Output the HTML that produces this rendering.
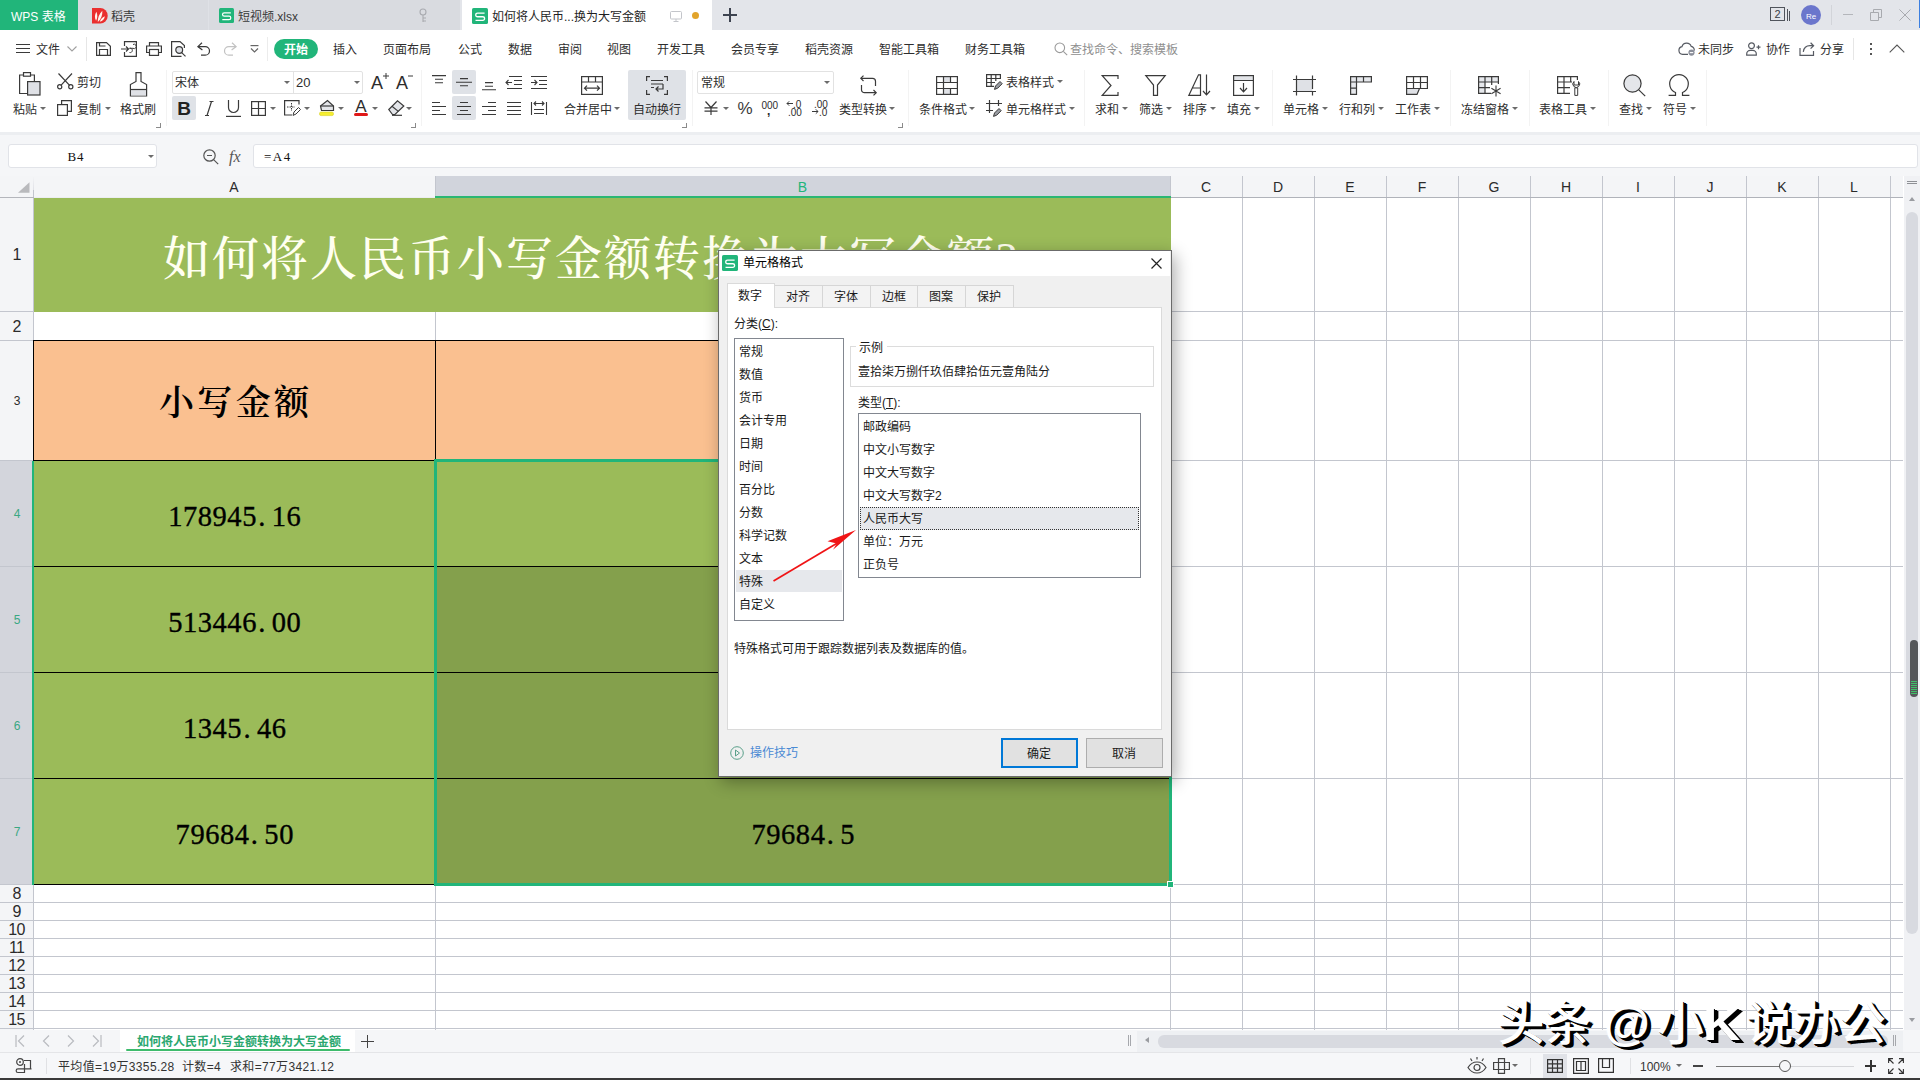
<!DOCTYPE html>
<html lang="zh-CN">
<head>
<meta charset="utf-8">
<title>WPS 表格 - 如何将人民币小写金额转换为大写金额</title>
<style>
*{box-sizing:border-box;margin:0;padding:0}
html,body{width:1920px;height:1080px;overflow:hidden;background:#fff}
body{position:relative;font-family:"Liberation Sans","Noto Sans CJK SC",sans-serif;font-size:12px;color:#2b2b2b;line-height:1}
.abs{position:absolute}
.t{position:absolute;white-space:nowrap;font-size:12px;line-height:14px;height:14px;color:#2d2d2d;margin-top:1px}
.tc{transform:translateX(-50%)}
svg{position:absolute;overflow:visible}
.ic{fill:none;stroke:#3a3a3a;stroke-width:1.2;stroke-linecap:butt;stroke-linejoin:miter}
.arr{position:absolute;width:0;height:0;border-left:3px solid transparent;border-right:3px solid transparent;border-top:3px solid #6b6b6b}
.vsep{position:absolute;width:1px;background:#f3f3f3;top:70px;height:56px}
.lch{position:absolute;width:5px;height:5px;border-right:1px solid #8a8a8a;border-bottom:1px solid #8a8a8a;top:123px}
.hl{position:absolute;background:#dfe2e7;border-radius:2px}
/* title bar */
#titlebar{left:0;top:0;width:1920px;height:30px;background:#e3e5ea}
#menubar{left:0;top:30px;width:1920px;height:36px;background:#fff}
#ribbon{left:0;top:66px;width:1920px;height:66px;background:#fff}
#strip{left:0;top:132px;width:1920px;height:3px;background:#eceef1}
#fbar{left:0;top:135px;width:1920px;height:41px;background:#f5f6f8}
.menu{position:absolute;top:43px;font-size:12px;line-height:14px;color:#2d2d2d;white-space:nowrap}
/* grid */
#grid{left:0;top:176px;width:1905px;height:854px;background:#fff;overflow:hidden}
.colh{position:absolute;top:0;height:21px;font-size:14px;line-height:21px;text-align:center;color:#2b2b2b;border-right:1px solid #d3d6dd}
.rowh{position:absolute;left:0;width:33px;font-size:14px;text-align:center;color:#2b2b2b}
.gl{position:absolute;background:#c3c6ce}
.cell{position:absolute;font-family:"Liberation Serif","Noto Serif CJK SC",serif;color:#000;text-align:center;white-space:nowrap}
/* dialog */
#dlg{left:718px;top:250px;width:454px;height:527px;background:#f0f0f0;border:1px solid #6b6b6b;box-shadow:3px 5px 16px rgba(0,0,0,.33)}
.dl{position:absolute;font-size:12px;line-height:14px;white-space:nowrap;color:#1a1a1a;margin-top:1px}
</style>
</head>
<body>
<!-- ============ TITLE BAR ============ -->
<div id="titlebar" class="abs">
  <div class="abs" style="left:0;top:0;width:78px;height:30px;background:#21b57a"></div>
  <div class="t" style="left:11px;top:9px;color:#fff;font-size:12px">WPS 表格</div>
  <div class="abs" style="left:78px;top:0;width:130px;height:30px;background:#d9dbe0"></div>
  <div class="abs" style="left:208px;top:0;width:1px;height:30px;background:#dfe1e6"></div>
  <div class="abs" style="left:209px;top:0;width:251px;height:30px;background:#d9dbe0"></div>
  <!-- docer icon -->
  <svg style="left:92px;top:8px" width="15.5" height="15.5" viewBox="0 0 15 15"><path d="M0 0H8A7.2 7.5 0 0 1 8 15H0Z" fill="#ea2f2f"/><path d="M3.9 12.3C2.3 9.6 2.6 6.3 4.2 3.6C5.6 6.6 5.4 9.8 3.9 12.3ZM5.6 13.6C5.4 9.4 7 5.6 10 2.6C10.3 7 8.8 10.8 5.6 13.600ZM7.6 13.4C8.2 10.800 9.900 9 12.400 8C12.100 10.600 10.400 12.600 7.600 13.400Z" fill="#fff5ee"/></svg>
  <div class="t" style="left:111px;top:9px;color:#3a3a3a">稻壳</div>
  <!-- S icon -->
  <svg style="left:219px;top:8px" width="15" height="15" viewBox="0 0 15 15"><rect width="15" height="15" rx="1.5" fill="#21b57a"/><path d="M11.800 4.800H5.300Q3.500 4.800 3.500 6.500Q3.500 8.200 5.300 8.200H10Q11.800 8.200 11.800 9.900Q11.800 11.600 10 11.600H3.300" fill="none" stroke="#fff" stroke-width="1.200"/></svg>
  <div class="t" style="left:238px;top:9px;color:#3a3a3a">短视频.xlsx</div>
  <!-- pin -->
  <svg style="left:418px;top:8px" width="10" height="16" viewBox="0 0 10 16"><circle cx="5" cy="4" r="3" fill="none" stroke="#a9abb0" stroke-width="1.1"/><path d="M5 7V14M5 10H8M5 13H8" fill="none" stroke="#a9abb0" stroke-width="1.1"/></svg>
  <!-- active tab -->
  <div class="abs" style="left:462px;top:0;width:250px;height:30px;background:#fff"></div>
  <svg style="left:472px;top:8px" width="16" height="16" viewBox="0 0 15 15"><rect width="15" height="15" rx="1.5" fill="#21b57a"/><path d="M11.800 4.800H5.300Q3.500 4.800 3.500 6.500Q3.500 8.200 5.300 8.200H10Q11.800 8.200 11.800 9.900Q11.800 11.600 10 11.600H3.300" fill="none" stroke="#fff" stroke-width="1.200"/></svg>
  <div class="t" style="left:492px;top:9px;color:#1f1f1f">如何将人民币...换为大写金额</div>
  <svg style="left:670px;top:11px" width="12" height="11" viewBox="0 0 12 11"><rect x=".5" y=".5" width="11" height="7.5" rx="1" fill="none" stroke="#c3c5ca"/><path d="M6 8V10.5M3.5 10.5H8.5" stroke="#c3c5ca" fill="none"/></svg>
  <div class="abs" style="left:692px;top:12px;width:7px;height:7px;border-radius:50%;background:#e2a42b"></div>
  <!-- plus -->
  <div class="abs" style="left:723px;top:14px;width:14px;height:2px;background:#3d4350"></div>
  <div class="abs" style="left:729px;top:8px;width:2px;height:14px;background:#3d4350"></div>
  <!-- right controls -->
  <svg style="left:1770px;top:7px" width="21" height="15" viewBox="0 0 21 15"><rect x=".5" y=".5" width="14" height="13" fill="none" stroke="#50545c"/><path d="M17.5 2V14M19.5 4V14" stroke="#50545c" fill="none"/><text x="7.5" y="11.3" font-size="11" text-anchor="middle" fill="#3a3d44" font-family="Liberation Sans,sans-serif">2</text></svg>
  <div class="abs" style="left:1801px;top:5px;width:20px;height:20px;border-radius:50%;background:#6b76cc"></div>
  <div class="t" style="left:1811px;top:9px;font-size:8px;color:#fff;transform:translateX(-50%)">Re</div>
  <div class="abs" style="left:1831px;top:5px;width:1px;height:20px;background:#d2d4d9"></div>
  <div class="abs" style="left:1843px;top:14px;width:10px;height:1px;background:#b4b6bb"></div>
  <svg style="left:1870px;top:9px" width="12" height="12" viewBox="0 0 12 12"><path d="M.5 3.5H8.5V11.5H.5ZM3.5 3.5V.5H11.5V8.5H8.5" fill="none" stroke="#a8aaaf"/></svg>
  <svg style="left:1899px;top:9px" width="12" height="12" viewBox="0 0 12 12"><path d="M.5 .5L11.5 11.5M11.5 .5L.5 11.5" fill="none" stroke="#a8aaaf"/></svg>
</div>
<div class="abs" style="left:1919px;top:0;width:1px;height:28px;background:#3c7fe0"></div>
<!-- ============ MENU BAR ============ -->
<div id="menubar" class="abs"></div>
<svg style="left:16px;top:43px" width="14" height="12" viewBox="0 0 14 12"><path d="M0 1.500H14M0 5.500H14M0 9.500H14" class="ic" style="stroke-width:1.100"/></svg>
<div class="menu" style="left:36px">文件</div>
<svg style="left:67px;top:46px" width="10" height="6" viewBox="0 0 10 6"><path d="M.5 .5L5 5L9.5 .5" fill="none" stroke="#a0a0a0" stroke-width="1.1"/></svg>
<div class="abs" style="left:86px;top:37px;width:1px;height:24px;background:#e6e6e6"></div>
<!-- save -->
<svg style="left:96px;top:42px" width="15" height="14" viewBox="0 0 15 14"><path d="M.6 .6H10.5L14.4 4.2V13.4H.6Z" class="ic"/><path d="M3.5 13.4V7.5H11.5V13.4M3.5 .6V4H9.5" class="ic"/></svg>
<!-- export -->
<svg style="left:121px;top:41px" width="16" height="16" viewBox="0 0 16 16"><path d="M3.5 5V.6H15.4V15.4H3.5V11" class="ic"/><path d="M0 8H7.5M5 5.5L7.5 8L5 10.5" class="ic"/><path d="M8.5 11.5A2.2 2.2 0 1 0 8.5 7.3H12A2.2 2.2 0 1 0 12 3.5" class="ic" style="stroke-width:1"/></svg>
<!-- print -->
<svg style="left:146px;top:42px" width="16" height="14" viewBox="0 0 16 14"><path d="M3.5 4V.6H12.5V4M3.5 10.5H.6V4H15.4V10.5H12.5" class="ic"/><rect x="3.5" y="7.5" width="9" height="5.9" class="ic"/></svg>
<!-- preview -->
<svg style="left:171px;top:41px" width="16" height="16" viewBox="0 0 16 16"><path d="M10.5 15.4H.6V.6H9L13.4 4.5V7" class="ic"/><circle cx="8.2" cy="9" r="3.4" class="ic" fill="#dfe1e6" style="fill:#dfe1e6"/><path d="M10.7 11.6L14.5 15.4" class="ic"/></svg>
<!-- undo -->
<svg style="left:197px;top:42px" width="14" height="14" viewBox="0 0 14 14"><path d="M5 .8L.9 4.6L5.4 8" class="ic"/><path d="M1 4.6H8.2A4.3 4.3 0 0 1 8.2 13.2H4" class="ic"/></svg>
<!-- redo -->
<svg style="left:223px;top:42px" width="14" height="14" viewBox="0 0 14 14"><path d="M9 .8L13.1 4.6L8.6 8" class="ic" style="stroke:#c2c2c2"/><path d="M13 4.6H5.8A4.3 4.3 0 0 0 5.8 13.2H10" class="ic" style="stroke:#c2c2c2"/></svg>
<!-- qat dropdown -->
<svg style="left:250px;top:45px" width="9" height="8" viewBox="0 0 9 8"><path d="M.5 .6H8.5" class="ic" style="stroke:#666"/><path d="M1 3.5L4.5 7L8 3.5" class="ic" style="stroke:#666"/></svg>
<div class="abs" style="left:267px;top:37px;width:1px;height:24px;background:#ececec"></div>
<div class="abs" style="left:274px;top:39px;width:44px;height:20px;border-radius:10px;background:#21b57a"></div>
<div class="menu" style="left:284px;color:#fff;font-weight:bold">开始</div>
<div class="menu" style="left:333px">插入</div>
<div class="menu" style="left:383px">页面布局</div>
<div class="menu" style="left:458px">公式</div>
<div class="menu" style="left:508px">数据</div>
<div class="menu" style="left:558px">审阅</div>
<div class="menu" style="left:607px">视图</div>
<div class="menu" style="left:657px">开发工具</div>
<div class="menu" style="left:731px">会员专享</div>
<div class="menu" style="left:805px">稻壳资源</div>
<div class="menu" style="left:879px">智能工具箱</div>
<div class="menu" style="left:965px">财务工具箱</div>
<svg style="left:1054px;top:42px" width="14" height="14" viewBox="0 0 14 14"><circle cx="5.8" cy="5.8" r="4.8" fill="none" stroke="#9a9a9a" stroke-width="1.1"/><path d="M9.3 9.3L13.2 13.2" stroke="#9a9a9a" stroke-width="1.1"/></svg>
<div class="menu" style="left:1070px;color:#8f8f8f">查找命令、搜索模板</div>
<!-- right -->
<svg style="left:1678px;top:42px" width="18" height="14" viewBox="0 0 18 14"><path d="M10 12.4H4.6A3.9 3.9 0 0 1 4 4.7A4.8 4.8 0 0 1 13.2 4.4A3.6 3.6 0 0 1 16.2 8.6" class="ic" style="stroke:#565a62"/><circle cx="13.5" cy="10.6" r="3.1" fill="#8a8e99"/><path d="M11.8 10.6H15.2" stroke="#fff" stroke-width="1.1"/></svg>
<div class="menu" style="left:1698px">未同步</div>
<svg style="left:1746px;top:42px" width="15" height="14" viewBox="0 0 15 14"><circle cx="5.5" cy="3.8" r="2.9" class="ic" style="stroke:#565a62"/><path d="M.7 13.2V12A3.6 3.6 0 0 1 4.3 8.4H6.7A3.6 3.6 0 0 1 10.3 12V13.2Z" class="ic" style="stroke:#565a62"/><path d="M10.5 5.2H14.5M12.5 3.2V7.2" class="ic" style="stroke:#565a62"/></svg>
<div class="menu" style="left:1766px">协作</div>
<svg style="left:1799px;top:42px" width="16" height="14" viewBox="0 0 16 14"><path d="M1 6V13.3H14.5V9" class="ic" style="stroke:#565a62"/><path d="M4.3 9.8C4.8 6 7.5 3.7 11 3.7H14.5M11.6 .8L14.6 3.7L11.6 6.6" class="ic" style="stroke:#565a62"/></svg>
<div class="menu" style="left:1820px">分享</div>
<div class="abs" style="left:1853px;top:38px;width:1px;height:22px;background:#e6e6e6"></div>
<div class="abs" style="left:1870px;top:43px;width:2px;height:2px;background:#555;box-shadow:0 5px 0 #555,0 10px 0 #555"></div>
<svg style="left:1889px;top:44px" width="16" height="9" viewBox="0 0 16 9"><path d="M.7 8.3L8 1L15.3 8.3" fill="none" stroke="#555" stroke-width="1.1"/></svg>
<!-- ============ RIBBON ============ -->
<div id="ribbon" class="abs"></div>
<div id="strip" class="abs"></div>
<!-- paste -->
<svg style="left:19px;top:72px" width="22" height="24" viewBox="0 0 22 24"><path d="M4.5 3H.6V21.5H8.5" class="ic"/><path d="M11.5 3H15.4V9.5" class="ic"/><rect x="4.5" y=".6" width="7" height="3.6" class="ic"/><rect x="8.6" y="9.6" width="12.4" height="13.4" class="ic" style="fill:#dfe1e6"/></svg>
<div class="t" style="left:13px;top:102px">粘贴</div><div class="arr" style="left:40px;top:107px"></div>
<!-- cut -->
<svg style="left:57px;top:73px" width="17" height="17" viewBox="0 0 17 17"><path d="M1.5 .5L12.6 12.4M15 .5L3.9 12.4" class="ic"/><circle cx="2.7" cy="13.8" r="2.1" class="ic"/><circle cx="13.8" cy="13.8" r="2.1" class="ic"/></svg>
<div class="t" style="left:77px;top:75px">剪切</div>
<!-- copy -->
<svg style="left:57px;top:100px" width="16" height="16" viewBox="0 0 16 16"><path d="M4.6 4.6V.6H14.4V11.4H10.5" class="ic"/><rect x=".6" y="4.6" width="9.8" height="10.8" class="ic"/></svg>
<div class="t" style="left:77px;top:102px">复制</div><div class="arr" style="left:105px;top:107px"></div>
<!-- format painter -->
<svg style="left:129px;top:72px" width="19" height="25" viewBox="0 0 19 25"><path d="M7 .6H12V9.5L17.6 12.5V24H1.4V12.5L7 9.5Z" class="ic"/><path d="M2 18H17V23.4H2Z" fill="#dfe1e6"/><path d="M1.4 17.5H17.6" class="ic"/></svg>
<div class="t" style="left:120px;top:102px">格式刷</div>
<div class="lch" style="left:156px"></div>
<div class="vsep" style="left:166px"></div>
<!-- font boxes -->
<div class="abs" style="left:172px;top:71px;width:191px;height:23px;border:1px solid #e2e2e2;border-radius:2px;background:#fff"></div>
<div class="abs" style="left:293px;top:72px;width:1px;height:21px;background:#e2e2e2"></div>
<div class="t" style="left:175px;top:75px">宋体</div><div class="arr" style="left:284px;top:81px"></div>
<div class="t" style="left:296px;top:75px;font-size:13px">20</div><div class="arr" style="left:354px;top:81px"></div>
<!-- A+ A- -->
<div class="t" style="left:371px;top:73px;font-size:18px;line-height:18px;height:18px">A</div>
<svg style="left:383px;top:73px" width="6" height="6" viewBox="0 0 6 6"><path d="M0 3H6M3 0V6" class="ic" style="stroke-width:1"/></svg>
<div class="t" style="left:396px;top:73px;font-size:18px;line-height:18px;height:18px">A</div>
<svg style="left:408px;top:75px" width="5" height="2" viewBox="0 0 5 2"><path d="M0 1H5" class="ic" style="stroke-width:1"/></svg>
<!-- B I U -->
<div class="hl" style="left:172px;top:96px;width:24px;height:24px"></div>
<div class="t" style="left:184px;top:98px;font-size:19px;line-height:20px;height:20px;font-weight:bold;transform:translateX(-50%);color:#222">B</div>
<svg style="left:205px;top:101px" width="9" height="15" viewBox="0 0 9 15"><path d="M6.5 .5L2 14.5M4.5 .5H8.5M0 14.5H4" class="ic"/></svg>
<svg style="left:226px;top:100px" width="15" height="17" viewBox="0 0 15 17"><path d="M2.5 0V7.5A5 5 0 0 0 12.5 7.5V0" class="ic"/><path d="M0 16.4H15" class="ic"/></svg>
<!-- border -->
<svg style="left:251px;top:101px" width="15" height="15" viewBox="0 0 15 15"><rect x=".6" y=".6" width="13.8" height="13.8" class="ic"/><path d="M7.5 .6V14.4M.6 7.5H14.4" class="ic"/></svg><div class="arr" style="left:270px;top:107px"></div>
<!-- draw border -->
<svg style="left:284px;top:100px" width="17" height="16" viewBox="0 0 17 16"><path d="M8 15H.6V.6H15V4.5" class="ic"/><path d="M7.5 3V11M3 7H11" class="ic" style="stroke-dasharray:1.5 1;stroke-width:1"/><path d="M9 15.4L10 12L14.5 7.5L16.5 9.5L12 14Z" class="ic" style="stroke-width:1"/></svg><div class="arr" style="left:304px;top:107px"></div>
<!-- fill color -->
<svg style="left:318px;top:99px" width="18" height="18" viewBox="0 0 18 18"><path d="M2.5 7L9.5 1.5L15.5 7V11.5H3.5Z" class="ic" style="fill:#e4e6ea"/><path d="M2.5 7H15.5" class="ic"/><rect x="1.5" y="13" width="14" height="3.6" rx="1.6" fill="#f5ee31" stroke="#d8d020" stroke-width=".6"/></svg><div class="arr" style="left:338px;top:107px"></div>
<!-- font color -->
<div class="t" style="left:361px;top:97px;font-size:17px;line-height:18px;height:18px;transform:translateX(-50%);color:#2d2d2d">A</div>
<div class="abs" style="left:354px;top:113px;width:14px;height:3px;border-radius:1.5px;background:#e01818"></div><div class="arr" style="left:372px;top:107px"></div>
<!-- eraser -->
<svg style="left:388px;top:100px" width="17" height="16" viewBox="0 0 17 16"><path d="M.8 9.5L9.5 .8L15.8 6L7 14.5H4.5Z" class="ic" style="fill:#e4e6ea"/><path d="M4 6.3L10.3 11.4" class="ic"/><path d="M4 15.3H14" class="ic"/></svg><div class="arr" style="left:406px;top:107px"></div>
<div class="lch" style="left:411px"></div>
<div class="vsep" style="left:421px"></div>
<!-- alignment -->
<div class="hl" style="left:452px;top:70px;width:24px;height:24px"></div>
<div class="hl" style="left:452px;top:96px;width:24px;height:24px"></div>
<svg style="left:432px;top:74.500px" width="14" height="9" viewBox="0 0 14 9"><path d="M0 .6H14M3 4.2H11M3 7.8H11" class="ic" style="stroke-width:1.1"/></svg>
<svg style="left:456px;top:78px" width="16" height="9" viewBox="0 0 16 9"><path d="M4 .6H12M0 4.2H16M4 7.8H12" class="ic" style="stroke-width:1.1"/></svg>
<svg style="left:482px;top:81.500px" width="14" height="9" viewBox="0 0 14 9"><path d="M3 .6H11M3 4.2H11M0 7.8H14" class="ic" style="stroke-width:1.1"/></svg>
<svg style="left:506px;top:76px" width="16" height="13" viewBox="0 0 16 13"><path d="M3 .5H16M8 4.5H16M8 8.5H16M1 12.5H16M0 6.5H6M2.5 4L0 6.5L2.5 9" class="ic" style="stroke-width:1.1"/></svg>
<svg style="left:531px;top:76px" width="16" height="13" viewBox="0 0 16 13"><path d="M0 .5H16M8 4.5H16M8 8.5H16M0 12.5H16M0 6.5H6M3.5 4L6 6.5L3.5 9" class="ic" style="stroke-width:1.1"/></svg>
<svg style="left:432px;top:102px" width="14" height="13" viewBox="0 0 14 13"><path d="M0 .5H8M0 4.5H14M0 8.5H8M0 12.5H14" class="ic" style="stroke-width:1.1"/></svg>
<svg style="left:457px;top:102px" width="14" height="13" viewBox="0 0 14 13"><path d="M3 .5H11M0 4.5H14M3 8.5H11M0 12.5H14" class="ic" style="stroke-width:1.1"/></svg>
<svg style="left:482px;top:102px" width="14" height="13" viewBox="0 0 14 13"><path d="M6 .5H14M0 4.5H14M6 8.5H14M0 12.5H14" class="ic" style="stroke-width:1.1"/></svg>
<svg style="left:507px;top:102px" width="14" height="13" viewBox="0 0 14 13"><path d="M0 .5H14M0 4.5H14M0 8.5H14M0 12.5H14" class="ic" style="stroke-width:1.1"/></svg>
<svg style="left:531px;top:101px" width="16" height="14" viewBox="0 0 16 14"><path d="M.5 1V14M15.5 1V14M3 8.5H13M3 12.5H13M3 2.5H13M5 .5L3 2.5L5 4.5M11 .5L13 2.5L11 4.5" class="ic" style="stroke-width:1.1"/></svg>
<!-- merge -->
<svg style="left:581px;top:76px" width="22" height="19" viewBox="0 0 22 19"><rect x=".6" y=".6" width="20.8" height="17.8" class="ic"/><path d="M.6 6H21.4M7.5 .6V6M14.5 .6V6M3.5 12.2H18.5M6 9.7L3.5 12.2L6 14.7M16 9.7L18.5 12.2L16 14.7" class="ic"/></svg>
<div class="t" style="left:564px;top:102px">合并居中</div><div class="arr" style="left:614px;top:107px"></div>
<!-- wrap -->
<div class="hl" style="left:628px;top:70px;width:58px;height:50px"></div>
<svg style="left:646px;top:76px" width="22" height="19" viewBox="0 0 22 19"><path d="M4 .6H.6V5M18 .6H21.4V5M4 18.4H.6V14M18 18.4H21.4V14" class="ic"/><path d="M5 4.5H17M5 8H17M17 8V13H10M12.5 10.5L10 13L12.5 15.5M5 11.5H8" class="ic"/></svg>
<div class="t" style="left:633px;top:102px">自动换行</div>
<div class="lch" style="left:682px"></div>
<div class="vsep" style="left:692px"></div>
<!-- number format -->
<div class="abs" style="left:697px;top:71px;width:137px;height:23px;border:1px solid #e2e2e2;border-radius:2px;background:#fff"></div>
<div class="t" style="left:701px;top:75px">常规</div><div class="arr" style="left:824px;top:81px"></div>
<svg style="left:704px;top:101px" width="14" height="14" viewBox="0 0 14 14"><path d="M1.5 .5L7 6.5L12.5 .5M7 6.5V14M.5 6.8H13.5M.5 10.2H13.5" class="ic"/></svg><div class="arr" style="left:723px;top:107px"></div>
<div class="t" style="left:737.500px;top:100px;font-size:17px;line-height:16px;height:16px;color:#3a3a3a">%</div>
<div class="t" style="left:761.500px;top:99.500px;font-size:10px;line-height:10px;height:10px;letter-spacing:0">000</div>
<div class="t" style="left:767px;top:105px;font-size:12px;line-height:10px;height:10px;font-weight:bold">,</div>
<div class="t" style="left:793px;top:98.500px;font-size:10px;line-height:10px;height:10px">.0</div>
<svg style="left:787px;top:100.500px" width="6" height="5" viewBox="0 0 6 5"><path d="M0 2.5H6M2.2 .3L0 2.5L2.2 4.7" class="ic" style="stroke-width:1"/></svg>
<div class="t" style="left:788px;top:107px;font-size:10px;line-height:10px;height:10px">.00</div>
<div class="t" style="left:814px;top:98.500px;font-size:10px;line-height:10px;height:10px">.00</div>
<svg style="left:812px;top:109px" width="6" height="5" viewBox="0 0 6 5"><path d="M0 2.5H6M3.8 .3L6 2.5L3.8 4.7" class="ic" style="stroke-width:1"/></svg>
<div class="t" style="left:819px;top:107px;font-size:10px;line-height:10px;height:10px">.0</div>
<!-- type convert -->
<svg style="left:859px;top:75px" width="19" height="21" viewBox="0 0 19 21"><path d="M4.500 .6L1.800 3.300L4.500 6" class="ic"/><path d="M2 3.300H13.500A3 3 0 0 1 16.500 6.300V11" class="ic"/><path d="M14.500 15L17.200 17.700L14.500 20.400" class="ic"/><path d="M17 17.700H5.500A3 3 0 0 1 2.500 14.700V10" class="ic"/></svg>
<div class="t" style="left:839px;top:102px">类型转换</div><div class="arr" style="left:889px;top:107px"></div>
<div class="lch" style="left:898px"></div>
<div class="vsep" style="left:908px"></div>
<!-- conditional format -->
<svg style="left:936px;top:76px" width="22" height="19" viewBox="0 0 22 19"><path d="M7.500 .6H14.500V6.500H7.500ZM7.500 12.500H14.500V18.400H7.500Z" fill="#dfe1e6"/><rect x=".6" y=".6" width="20.800" height="17.800" class="ic"/><path d="M.6 6.500H21.400M.6 12.500H21.400M7.500 .6V18.400M14.500 .6V6.500M14.500 12.500V18.400" class="ic"/></svg>
<div class="t" style="left:919px;top:102px">条件格式</div><div class="arr" style="left:969px;top:107px"></div>
<!-- table style -->
<svg style="left:986px;top:74px" width="17" height="16" viewBox="0 0 17 16"><path d="M8 12.400H.6V.6H14.400V5" class="ic"/><path d="M.6 4.500H14.400M.6 8.500H9M5.200 .6V12.400M9.800 .6V7" class="ic"/><path d="M8.500 15.400L9.500 12L14 7.500L16.200 9.700L11.700 14.200Z" class="ic" style="stroke-width:1;fill:#9a9da3"/></svg>
<div class="t" style="left:1006px;top:75px">表格样式</div><div class="arr" style="left:1057px;top:80px"></div>
<!-- cell style -->
<svg style="left:986px;top:100px" width="17" height="17" viewBox="0 0 17 17"><path d="M3.500 0V13M0 3.500H16M12.500 0V6M0 10.500H7" class="ic"/><path d="M7.500 16.400L8.500 13L13 8.500L15.200 10.700L10.700 15.200Z" class="ic" style="stroke-width:1;fill:#9a9da3"/></svg>
<div class="t" style="left:1006px;top:102px">单元格样式</div><div class="arr" style="left:1069px;top:107px"></div>
<div class="vsep" style="left:1084px"></div>
<!-- sum -->
<svg style="left:1101px;top:75px" width="18" height="21" viewBox="0 0 18 21"><path d="M17 4V.6H1.200L10 10.500L1.200 20.400H17V17" class="ic"/></svg>
<div class="t" style="left:1095px;top:102px">求和</div><div class="arr" style="left:1122px;top:107px"></div>
<!-- filter -->
<svg style="left:1145px;top:75px" width="21" height="21" viewBox="0 0 21 21"><path d="M.8 .6H20.200L12.500 10V20.400H8.500V10Z" class="ic"/></svg>
<div class="t" style="left:1139px;top:102px">筛选</div><div class="arr" style="left:1166px;top:107px"></div>
<!-- sort -->
<svg style="left:1188px;top:74px" width="23" height="22" viewBox="0 0 23 22"><path d="M.8 21.400L10.500 .8H12.500V21.400ZM4.500 14H12.500" class="ic"/><path d="M18.500 .6V20.500M15 17L18.500 20.800L22 17" class="ic"/></svg>
<div class="t" style="left:1183px;top:102px">排序</div><div class="arr" style="left:1210px;top:107px"></div>
<!-- fill -->
<svg style="left:1233px;top:75px" width="21" height="21" viewBox="0 0 21 21"><rect x=".6" y=".6" width="19.800" height="4.900" fill="#e2e4e8"/><rect x=".6" y=".6" width="19.800" height="19.800" class="ic"/><path d="M.6 5.500H20.400M10.500 8V16.500M7 13L10.500 16.800L14 13" class="ic"/></svg>
<div class="t" style="left:1227px;top:102px">填充</div><div class="arr" style="left:1254px;top:107px"></div>
<div class="vsep" style="left:1272px"></div>
<!-- cells -->
<svg style="left:1293px;top:75px" width="23" height="21" viewBox="0 0 23 21"><rect x="3.500" y="4.500" width="16" height="12" fill="#dfe1e6"/><path d="M0 4.500H23M0 16.500H23M3.500 .5V20.500M19.500 .5V14M19.500 17V20.500" class="ic"/></svg>
<div class="t" style="left:1283px;top:102px">单元格</div><div class="arr" style="left:1322px;top:107px"></div>
<!-- rows & cols -->
<svg style="left:1350px;top:76px" width="22" height="19" viewBox="0 0 22 19"><path d="M.6 .6H21.400V6H6.500V18.400H.6Z" fill="#e6e8ec"/><path d="M.6 .6H21.400V6H.6ZM.6 6V18.400H6.500V6M.6 12.200H6.500M6.500 .6V6M13.500 .6V6" class="ic"/></svg>
<div class="t" style="left:1339px;top:102px">行和列</div><div class="arr" style="left:1378px;top:107px"></div>
<!-- worksheet -->
<svg style="left:1406px;top:76px" width="22" height="19" viewBox="0 0 22 19"><path d="M.6 12.500H13.500L11 18.400H.6Z" fill="#dfe1e6"/><path d="M.6 .6H21.400V12.500H.6ZM.6 6.500H21.400M7.500 .6V12.500M14.500 .6V12.500M.6 12.500V18.400H11L13.500 12.500" class="ic"/></svg>
<div class="t" style="left:1395px;top:102px">工作表</div><div class="arr" style="left:1434px;top:107px"></div>
<div class="vsep" style="left:1450px"></div>
<!-- freeze -->
<svg style="left:1478px;top:76px" width="23" height="20" viewBox="0 0 23 20"><path d="M.6 .6H20.400V6H7V17.400H.6Z" fill="#e6e8ec"/><path d="M13 17.400H.6V.6H20.400V8" class="ic"/><path d="M.6 6H20.400M.6 11.700H12M7 .6V17.400M13.700 .6V9" class="ic"/><path d="M18 9.500V20.500M13.400 12.300L22.600 17.700M22.600 12.300L13.400 17.700" class="ic" style="stroke-width:1.100"/></svg>
<div class="t" style="left:1461px;top:102px">冻结窗格</div><div class="arr" style="left:1512px;top:107px"></div>
<div class="vsep" style="left:1529px"></div>
<!-- table tools -->
<svg style="left:1557px;top:76px" width="24" height="20" viewBox="0 0 24 20"><path d="M13 17.400H.6V.6H20.400V4" class="ic"/><path d="M.6 6H15M.6 11.700H13M7 .6V17.400M13.700 .6V6" class="ic"/><path d="M17 5.500A3.400 3.400 0 1 0 21.500 5.500V9H17ZM17.800 11.800H20.700V19.400H17.800Z" class="ic" style="stroke-width:1;fill:#fff"/></svg>
<div class="t" style="left:1539px;top:102px">表格工具</div><div class="arr" style="left:1590px;top:107px"></div>
<div class="vsep" style="left:1608px"></div>
<!-- find -->
<svg style="left:1623px;top:74px" width="23" height="23" viewBox="0 0 23 23"><circle cx="9.500" cy="9.500" r="8.600" class="ic" style="fill:#e4e6ea"/><path d="M15.800 15.800L22.200 22.200" class="ic"/></svg>
<div class="t" style="left:1619px;top:102px">查找</div><div class="arr" style="left:1646px;top:107px"></div>
<!-- symbol -->
<svg style="left:1668px;top:74px" width="22" height="22" viewBox="0 0 22 22"><path d="M.6 21.400H7.500V18.500A9.300 9.300 0 1 1 14.500 18.500V21.400H21.400" class="ic"/></svg>
<div class="t" style="left:1663px;top:102px">符号</div><div class="arr" style="left:1690px;top:107px"></div>
<div class="vsep" style="left:1706px"></div>
<!-- ============ FORMULA BAR ============ -->
<div id="fbar" class="abs"></div>
<div class="abs" style="left:8px;top:144px;width:149px;height:24px;background:#fff;border:1px solid #e1e3e8;border-radius:3px"></div>
<div class="t" style="left:76px;top:149px;font-family:'Liberation Serif','Noto Serif CJK SC',serif;font-size:13px;letter-spacing:1px;color:#111;transform:translateX(-50%)">B4</div>
<div class="arr" style="left:148px;top:155px"></div>
<svg style="left:203px;top:149px" width="16" height="16" viewBox="0 0 16 16"><circle cx="6.500" cy="6.500" r="5.700" class="ic" style="stroke:#555"/><path d="M10.600 10.600L15.200 15.200M4 6.500H9" class="ic" style="stroke:#555"/></svg>
<div class="t" style="left:229px;top:147px;font-family:'Liberation Serif',serif;font-style:italic;font-size:16px;line-height:18px;height:18px;color:#555">fx</div>
<div class="abs" style="left:253px;top:144px;width:1665px;height:24px;background:#fff;border:1px solid #e1e3e8;border-radius:3px"></div>
<div class="t" style="left:264px;top:149px;font-family:'Liberation Serif','Noto Serif CJK SC',serif;font-size:13px;letter-spacing:1.500px;color:#111">=A4</div>
<!-- ============ GRID ============ -->
<div id="grid" class="abs">
<div class="abs" style="left:0;top:0;width:1903px;height:21px;background:#f4f5f7"></div>
<div class="abs" style="left:0;top:21px;width:33px;height:833px;background:#f4f5f7"></div>
<div class="abs" style="left:435px;top:0;width:736px;height:21px;background:#d1d4dc"></div>
<div class="abs" style="left:0;top:285px;width:33px;height:424px;background:#d3d5dc"></div>
<svg style="left:17.500px;top:6px" width="11.500" height="11" viewBox="0 0 12 11"><path d="M12 0V11H0Z" fill="#b9babd"/></svg>
<div class="abs" style="left:33px;top:0;width:402px;height:21px;line-height:22px;font-size:14px;text-align:center;color:#2b2b2b">A</div>
<div class="abs" style="left:435px;top:0;width:735px;height:21px;line-height:22px;font-size:14px;text-align:center;color:#21b57a">B</div>
<div class="abs" style="left:1170px;top:0;width:72px;height:21px;line-height:22px;font-size:14px;text-align:center;color:#2b2b2b">C</div>
<div class="abs" style="left:1242px;top:0;width:72px;height:21px;line-height:22px;font-size:14px;text-align:center;color:#2b2b2b">D</div>
<div class="abs" style="left:1314px;top:0;width:72px;height:21px;line-height:22px;font-size:14px;text-align:center;color:#2b2b2b">E</div>
<div class="abs" style="left:1386px;top:0;width:72px;height:21px;line-height:22px;font-size:14px;text-align:center;color:#2b2b2b">F</div>
<div class="abs" style="left:1458px;top:0;width:72px;height:21px;line-height:22px;font-size:14px;text-align:center;color:#2b2b2b">G</div>
<div class="abs" style="left:1530px;top:0;width:72px;height:21px;line-height:22px;font-size:14px;text-align:center;color:#2b2b2b">H</div>
<div class="abs" style="left:1602px;top:0;width:72px;height:21px;line-height:22px;font-size:14px;text-align:center;color:#2b2b2b">I</div>
<div class="abs" style="left:1674px;top:0;width:72px;height:21px;line-height:22px;font-size:14px;text-align:center;color:#2b2b2b">J</div>
<div class="abs" style="left:1746px;top:0;width:72px;height:21px;line-height:22px;font-size:14px;text-align:center;color:#2b2b2b">K</div>
<div class="abs" style="left:1818px;top:0;width:72px;height:21px;line-height:22px;font-size:14px;text-align:center;color:#2b2b2b">L</div>
<div class="abs" style="left:0;top:70.0px;width:33px;height:18px;line-height:18px;font-size:16px;letter-spacing:-.7px;text-align:center;color:#2b2b2b">1</div>
<div class="abs" style="left:0;top:141.5px;width:33px;height:18px;line-height:18px;font-size:16px;letter-spacing:-.7px;text-align:center;color:#2b2b2b">2</div>
<div class="abs" style="left:0;top:216.0px;width:34px;height:18px;line-height:18px;font-size:12px;text-align:center;color:#2b2b2b">3</div>
<div class="abs" style="left:0;top:329.0px;width:34px;height:18px;line-height:18px;font-size:12px;text-align:center;color:#3aa883">4</div>
<div class="abs" style="left:0;top:435.0px;width:34px;height:18px;line-height:18px;font-size:12px;text-align:center;color:#3aa883">5</div>
<div class="abs" style="left:0;top:541.0px;width:34px;height:18px;line-height:18px;font-size:12px;text-align:center;color:#3aa883">6</div>
<div class="abs" style="left:0;top:647.0px;width:34px;height:18px;line-height:18px;font-size:12px;text-align:center;color:#3aa883">7</div>
<div class="abs" style="left:0;top:709.0px;width:33px;height:18px;line-height:18px;font-size:16px;letter-spacing:-.7px;text-align:center;color:#2b2b2b">8</div>
<div class="abs" style="left:0;top:727.0px;width:33px;height:18px;line-height:18px;font-size:16px;letter-spacing:-.7px;text-align:center;color:#2b2b2b">9</div>
<div class="abs" style="left:0;top:745.0px;width:33px;height:18px;line-height:18px;font-size:16px;letter-spacing:-.7px;text-align:center;color:#2b2b2b">10</div>
<div class="abs" style="left:0;top:763.0px;width:33px;height:18px;line-height:18px;font-size:16px;letter-spacing:-.7px;text-align:center;color:#2b2b2b">11</div>
<div class="abs" style="left:0;top:781.0px;width:33px;height:18px;line-height:18px;font-size:16px;letter-spacing:-.7px;text-align:center;color:#2b2b2b">12</div>
<div class="abs" style="left:0;top:799.0px;width:33px;height:18px;line-height:18px;font-size:16px;letter-spacing:-.7px;text-align:center;color:#2b2b2b">13</div>
<div class="abs" style="left:0;top:817.0px;width:33px;height:18px;line-height:18px;font-size:16px;letter-spacing:-.7px;text-align:center;color:#2b2b2b">14</div>
<div class="abs" style="left:0;top:835.0px;width:33px;height:18px;line-height:18px;font-size:16px;letter-spacing:-.7px;text-align:center;color:#2b2b2b">15</div>
<div class="gl" style="left:435px;top:0;width:1px;height:854px"></div>
<div class="gl" style="left:1170px;top:0;width:1px;height:854px"></div>
<div class="gl" style="left:1242px;top:0;width:1px;height:854px"></div>
<div class="gl" style="left:1314px;top:0;width:1px;height:854px"></div>
<div class="gl" style="left:1386px;top:0;width:1px;height:854px"></div>
<div class="gl" style="left:1458px;top:0;width:1px;height:854px"></div>
<div class="gl" style="left:1530px;top:0;width:1px;height:854px"></div>
<div class="gl" style="left:1602px;top:0;width:1px;height:854px"></div>
<div class="gl" style="left:1674px;top:0;width:1px;height:854px"></div>
<div class="gl" style="left:1746px;top:0;width:1px;height:854px"></div>
<div class="gl" style="left:1818px;top:0;width:1px;height:854px"></div>
<div class="gl" style="left:1890px;top:0;width:1px;height:854px"></div>
<div class="gl" style="left:33px;top:0;width:1px;height:854px"></div>
<div class="abs" style="left:33px;top:0;width:1px;height:14px;background:linear-gradient(#f4f5f7,#dfe1e6)"></div>
<div class="gl" style="left:0;top:21px;width:34px;height:1px;background:#b4b6bc"></div>
<div class="gl" style="left:34px;top:21px;width:401px;height:1px;background:#eceef1"></div>
<div class="gl" style="left:1171px;top:21px;width:732px;height:1px;background:#b0b3ba"></div>
<div class="gl" style="left:0;top:135px;width:1903px;height:1px"></div>
<div class="gl" style="left:0;top:164px;width:1903px;height:1px"></div>
<div class="gl" style="left:0;top:284px;width:1903px;height:1px"></div>
<div class="gl" style="left:0;top:390px;width:1903px;height:1px"></div>
<div class="gl" style="left:0;top:496px;width:1903px;height:1px"></div>
<div class="gl" style="left:0;top:602px;width:1903px;height:1px"></div>
<div class="gl" style="left:0;top:708px;width:1903px;height:1px"></div>
<div class="gl" style="left:0;top:726px;width:1903px;height:1px"></div>
<div class="gl" style="left:0;top:744px;width:1903px;height:1px"></div>
<div class="gl" style="left:0;top:762px;width:1903px;height:1px"></div>
<div class="gl" style="left:0;top:780px;width:1903px;height:1px"></div>
<div class="gl" style="left:0;top:798px;width:1903px;height:1px"></div>
<div class="gl" style="left:0;top:816px;width:1903px;height:1px"></div>
<div class="gl" style="left:0;top:834px;width:1903px;height:1px"></div>
<div class="gl" style="left:0;top:852px;width:1903px;height:1px"></div>
<div class="abs" style="left:435px;top:20px;width:736px;height:2px;background:#2bb673"></div>
<div class="abs" style="left:34px;top:22px;width:1137px;height:114px;background:#9bbb59"></div>
<div class="abs" style="left:34px;top:165px;width:1137px;height:120px;background:#fac090"></div>
<div class="abs" style="left:34px;top:285px;width:402px;height:424px;background:#9bbb59"></div>
<div class="abs" style="left:436px;top:285px;width:735px;height:106px;background:#9bbb59"></div>
<div class="abs" style="left:436px;top:391px;width:735px;height:318px;background:#84a04c"></div>
<div class="abs" style="left:33px;top:164px;width:1138px;height:1px;background:#000"></div>
<div class="abs" style="left:33px;top:284px;width:1138px;height:1px;background:#000"></div>
<div class="abs" style="left:33px;top:390px;width:1138px;height:1px;background:#000"></div>
<div class="abs" style="left:33px;top:496px;width:1138px;height:1px;background:#000"></div>
<div class="abs" style="left:33px;top:602px;width:1138px;height:1px;background:#000"></div>
<div class="abs" style="left:33px;top:708px;width:1138px;height:1px;background:#000"></div>
<div class="abs" style="left:33px;top:164px;width:1px;height:545px;background:#000"></div>
<div class="abs" style="left:435px;top:164px;width:1px;height:545px;background:#000"></div>
<div class="abs" style="left:1170px;top:164px;width:1px;height:545px;background:#000"></div>
<div class="abs" style="left:32px;top:285px;width:2px;height:424px;background:#21b57a"></div>
<div class="abs" style="left:434px;top:283px;width:738px;height:3px;background:#21b57a"></div>
<div class="abs" style="left:434px;top:707px;width:738px;height:3px;background:#21b57a"></div>
<div class="abs" style="left:434px;top:283px;width:3px;height:427px;background:#21b57a"></div>
<div class="abs" style="left:1169px;top:283px;width:3px;height:427px;background:#21b57a"></div>
<div class="abs" style="left:1167px;top:705px;width:7px;height:7px;background:#21b57a;border:1px solid #fff"></div>
<div class="abs" style="left:163px;top:57px;font-family:'Liberation Serif','Noto Serif CJK SC',serif;font-size:47px;letter-spacing:2px;line-height:52px;color:#fffff0;white-space:nowrap;font-weight:500">如何将人民币小写金额转换为大写金额?</div>
<div class="abs" style="left:33px;top:204px;width:402px;text-align:center;font-family:'Liberation Serif','Noto Serif CJK SC',serif;font-size:35px;letter-spacing:3.300px;padding-left:3.300px;line-height:48px;color:#000;font-weight:600;white-space:nowrap">小写金额</div>
<div class="abs" style="left:435px;top:204px;width:735px;text-align:center;font-family:'Liberation Serif','Noto Serif CJK SC',serif;font-size:35px;letter-spacing:3.300px;padding-left:3.300px;line-height:48px;color:#000;font-weight:600;white-space:nowrap">大写金额</div>
<div class="abs" style="left:34.5px;top:322.7px;width:400px;text-align:center;font-family:'Liberation Serif','Noto Serif CJK SC',serif;font-size:28.500px;line-height:36px;color:#000;white-space:nowrap;-webkit-text-stroke:.35px #000"><span style="display:inline-block;width:14.800px;text-align:center">1</span><span style="display:inline-block;width:14.800px;text-align:center">7</span><span style="display:inline-block;width:14.800px;text-align:center">8</span><span style="display:inline-block;width:14.800px;text-align:center">9</span><span style="display:inline-block;width:14.800px;text-align:center">4</span><span style="display:inline-block;width:14.800px;text-align:center">5</span><span style="display:inline-block;width:14.800px;text-align:left;padding-left:1.500px">.</span><span style="display:inline-block;width:14.800px;text-align:center">1</span><span style="display:inline-block;width:14.800px;text-align:center">6</span></div>
<div class="abs" style="left:34.5px;top:428.70000000000005px;width:400px;text-align:center;font-family:'Liberation Serif','Noto Serif CJK SC',serif;font-size:28.500px;line-height:36px;color:#000;white-space:nowrap;-webkit-text-stroke:.35px #000"><span style="display:inline-block;width:14.800px;text-align:center">5</span><span style="display:inline-block;width:14.800px;text-align:center">1</span><span style="display:inline-block;width:14.800px;text-align:center">3</span><span style="display:inline-block;width:14.800px;text-align:center">4</span><span style="display:inline-block;width:14.800px;text-align:center">4</span><span style="display:inline-block;width:14.800px;text-align:center">6</span><span style="display:inline-block;width:14.800px;text-align:left;padding-left:1.500px">.</span><span style="display:inline-block;width:14.800px;text-align:center">0</span><span style="display:inline-block;width:14.800px;text-align:center">0</span></div>
<div class="abs" style="left:34.5px;top:534.7px;width:400px;text-align:center;font-family:'Liberation Serif','Noto Serif CJK SC',serif;font-size:28.500px;line-height:36px;color:#000;white-space:nowrap;-webkit-text-stroke:.35px #000"><span style="display:inline-block;width:14.800px;text-align:center">1</span><span style="display:inline-block;width:14.800px;text-align:center">3</span><span style="display:inline-block;width:14.800px;text-align:center">4</span><span style="display:inline-block;width:14.800px;text-align:center">5</span><span style="display:inline-block;width:14.800px;text-align:left;padding-left:1.500px">.</span><span style="display:inline-block;width:14.800px;text-align:center">4</span><span style="display:inline-block;width:14.800px;text-align:center">6</span></div>
<div class="abs" style="left:34.5px;top:640.7px;width:400px;text-align:center;font-family:'Liberation Serif','Noto Serif CJK SC',serif;font-size:28.500px;line-height:36px;color:#000;white-space:nowrap;-webkit-text-stroke:.35px #000"><span style="display:inline-block;width:14.800px;text-align:center">7</span><span style="display:inline-block;width:14.800px;text-align:center">9</span><span style="display:inline-block;width:14.800px;text-align:center">6</span><span style="display:inline-block;width:14.800px;text-align:center">8</span><span style="display:inline-block;width:14.800px;text-align:center">4</span><span style="display:inline-block;width:14.800px;text-align:left;padding-left:1.500px">.</span><span style="display:inline-block;width:14.800px;text-align:center">5</span><span style="display:inline-block;width:14.800px;text-align:center">0</span></div>
<div class="abs" style="left:603px;top:640.7px;width:400px;text-align:center;font-family:'Liberation Serif','Noto Serif CJK SC',serif;font-size:28.500px;line-height:36px;color:#000;white-space:nowrap;-webkit-text-stroke:.35px #000"><span style="display:inline-block;width:14.800px;text-align:center">7</span><span style="display:inline-block;width:14.800px;text-align:center">9</span><span style="display:inline-block;width:14.800px;text-align:center">6</span><span style="display:inline-block;width:14.800px;text-align:center">8</span><span style="display:inline-block;width:14.800px;text-align:center">4</span><span style="display:inline-block;width:14.800px;text-align:left;padding-left:1.500px">.</span><span style="display:inline-block;width:14.800px;text-align:center">5</span></div>
</div>
<div class="abs" style="left:1904px;top:176px;width:16px;height:854px;background:#f0f1f4"></div>
<div class="abs" style="left:1906px;top:212px;width:12px;height:722px;background:#d8dae0;border-radius:6px"></div>
<div class="abs" style="left:1907px;top:181px;width:10px;height:1px;background:#8e9095;box-shadow:0 2px 0 #8e9095"></div>
<div class="arr" style="left:1909px;top:197px;border-top:none;border-bottom:4px solid #9a9ca1;border-left-width:3.500px;border-right-width:3.500px"></div>
<div class="arr" style="left:1909px;top:1018px;border-top:4px solid #9a9ca1;border-left-width:3.500px;border-right-width:3.500px"></div>
<div class="abs" style="left:1910px;top:640px;width:8px;height:57px;background:#55575a;border-radius:4px;overflow:hidden"><div class="abs" style="left:1px;top:41px;width:6px;height:14px;background:repeating-linear-gradient(#3fc068 0 1px,#55575a 1px 2px)"></div></div>
<!-- ============ SHEET TABS ============ -->
<div class="abs" style="left:0;top:1030px;width:1920px;height:23px;background:#f5f6f8"></div><div class="abs" style="left:1137px;top:1031px;width:766px;height:21px;background:#eef0f3"></div>
<svg style="left:15px;top:1035px" width="10" height="12" viewBox="0 0 10 12"><path d="M1 0V12M9 .5L3.500 6L9 11.500" fill="none" stroke="#b9bbc0" stroke-width="1.200"/></svg>
<svg style="left:42px;top:1035px" width="8" height="12" viewBox="0 0 8 12"><path d="M7 .5L1.500 6L7 11.500" fill="none" stroke="#b9bbc0" stroke-width="1.200"/></svg>
<svg style="left:67px;top:1035px" width="8" height="12" viewBox="0 0 8 12"><path d="M1 .5L6.500 6L1 11.500" fill="none" stroke="#b9bbc0" stroke-width="1.200"/></svg>
<svg style="left:92px;top:1035px" width="10" height="12" viewBox="0 0 10 12"><path d="M9 0V12M1 .5L6.500 6L1 11.500" fill="none" stroke="#b9bbc0" stroke-width="1.200"/></svg>
<div class="abs" style="left:120px;top:1030px;width:235px;height:22px;background:#fff"></div>
<div class="abs" style="left:126px;top:1049px;width:224px;height:2px;background:#3dbb6c;border-radius:1px"></div>
<div class="t" style="left:137px;top:1034px;color:#2aa76f;font-weight:bold">如何将人民币小写金额转换为大写金额</div>
<div class="abs" style="left:361px;top:1041px;width:13px;height:1px;background:#444"></div>
<div class="abs" style="left:367px;top:1035px;width:1px;height:13px;background:#444"></div>
<!-- h scrollbar -->
<div class="abs" style="left:1128px;top:1035px;width:1px;height:11px;background:#a6a8ad;box-shadow:2px 0 0 #a6a8ad"></div>
<div class="arr" style="left:1145px;top:1037px;border:none;border-top:3.500px solid transparent;border-bottom:3.500px solid transparent;border-right:4px solid #9a9ca1"></div>
<div class="abs" style="left:1158px;top:1035px;width:730px;height:13px;background:#d8dae0;border-radius:6px"></div>
<div class="abs" style="left:1893px;top:1035px;width:1px;height:11px;background:#a6a8ad;box-shadow:2px 0 0 #a6a8ad"></div>
<!-- ============ STATUS BAR ============ -->
<div class="abs" style="left:0;top:1052px;width:1920px;height:26px;background:#f6f7f9;border-top:1px solid #e4e5e8"></div>
<div class="abs" style="left:0;top:1078px;width:1920px;height:2px;background:#3a3a3a"></div>
<svg style="left:16px;top:1058px" width="17" height="16" viewBox="0 0 17 16"><circle cx="4" cy="4" r="3.300" class="ic" style="stroke:#444"/><circle cx="4" cy="4" r="1" fill="#444"/><path d="M8 2.500H14.500V10.500M8.500 6V14.500H2A1.800 1.800 0 0 1 2 10.800H15.500" class="ic" style="stroke:#444"/></svg>
<div class="abs" style="left:46px;top:1058px;width:1px;height:16px;background:#e0e1e4"></div>
<div class="t" style="left:58px;top:1059px;color:#333;letter-spacing:.35px">平均值=19万3355.28</div><div class="t" style="left:182px;top:1059px;color:#333;letter-spacing:.35px">计数=4</div><div class="t" style="left:230px;top:1059px;color:#333;letter-spacing:.35px">求和=77万3421.12</div>
<!-- right status -->
<svg style="left:1467px;top:1057px" width="20" height="17" viewBox="0 0 20 17"><path d="M1 10.500C3.500 6.500 6.500 5 10 5S16.500 6.500 19 10.500C16.500 14.500 13.500 16 10 16S3.500 14.500 1 10.500Z" class="ic" style="stroke:#444"/><circle cx="10" cy="10.500" r="3" class="ic" style="stroke:#444"/><path d="M10 0V2.500M3.500 1.500L5 4M16.500 1.500L15 4" class="ic" style="stroke:#444"/></svg>
<svg style="left:1493px;top:1058px" width="17" height="16" viewBox="0 0 17 16"><path d="M5.500 .6H11.500V15.400H5.500ZM.6 4.500H16.400V11.500H.6Z" class="ic" style="stroke:#444"/></svg><div class="arr" style="left:1512px;top:1064px"></div>
<div class="abs" style="left:1530px;top:1058px;width:1px;height:16px;background:#e0e1e4"></div>
<div class="abs" style="left:1543px;top:1054px;width:24px;height:24px;background:#e0e2e7"></div>
<svg style="left:1547px;top:1059px" width="16" height="14" viewBox="0 0 16 14"><path d="M.6 .6H15.400V13.400H.6ZM.6 4.800H15.400M.6 9.200H15.400M5.500 .6V13.400M10.500 .6V13.400" class="ic" style="stroke:#333"/></svg>
<svg style="left:1573px;top:1058px" width="16" height="16" viewBox="0 0 16 16"><path d="M.6 .6H15.400V15.400H.6ZM3.500 3.500H12.500V12.500H3.500ZM8 3.500V12.500" class="ic" style="stroke:#333"/></svg>
<svg style="left:1598px;top:1058px" width="16" height="15" viewBox="0 0 16 15"><path d="M.6 .6H15.400V14.400H.6ZM4.500 .6V9.500H11.500V.6" class="ic" style="stroke:#333"/></svg>
<div class="abs" style="left:1630px;top:1058px;width:1px;height:16px;background:#e0e1e4"></div>
<div class="t" style="left:1640px;top:1059px;color:#333">100%</div><div class="arr" style="left:1676px;top:1064px"></div>
<div class="abs" style="left:1693px;top:1065px;width:10px;height:2px;background:#444"></div>
<div class="abs" style="left:1716px;top:1066px;width:68px;height:1px;background:#777"></div>
<div class="abs" style="left:1784px;top:1066px;width:70px;height:1px;background:#d5d6d9"></div>
<div class="abs" style="left:1779px;top:1060px;width:12px;height:12px;border-radius:50%;background:#f6f7f9;border:1px solid #555"></div>
<div class="abs" style="left:1865px;top:1065px;width:11px;height:2px;background:#333"></div>
<div class="abs" style="left:1869.500px;top:1060px;width:2px;height:12px;background:#333"></div>
<svg style="left:1888px;top:1058px" width="16" height="16" viewBox="0 0 16 16"><path d="M.6 5V.6H5M11 .6H15.400V5M15.400 11V15.400H11M5 15.400H.6V11M1 1L5.500 5.500M15 1L10.500 5.500M15 15L10.500 10.500M1 15L5.500 10.500" class="ic" style="stroke:#333;stroke-width:1.100"/></svg>
<!-- ============ DIALOG ============ -->
<div id="dlg" class="abs">
<div class="abs" style="left:1px;top:0px;width:450px;height:25px;background:#fff"></div>
<svg style="left:3px;top:4px" width="16" height="16" viewBox="0 0 15 15"><rect width="15" height="15" rx="1.500" fill="#21b57a"/><path d="M11.800 4.800H5.300Q3.500 4.800 3.500 6.500Q3.500 8.200 5.300 8.200H10Q11.800 8.200 11.800 9.900Q11.800 11.600 10 11.600H3.300" fill="none" stroke="#fff" stroke-width="1.200"/></svg>
<div class="dl" style="left:24px;top:4px;color:#000">单元格格式</div>
<svg style="left:432px;top:7px" width="11" height="11" viewBox="0 0 11 11"><path d="M.5 .5L10.500 10.500M10.500 .5L.5 10.500" fill="none" stroke="#222" stroke-width="1.200"/></svg>
<div class="abs" style="left:8px;top:56px;width:435px;height:423px;background:#fff;border:1px solid #dadada"></div>
<div class="abs" style="left:8px;top:32px;width:48px;height:25px;background:#fff;border:1px solid #dadada;border-bottom:none"></div>
<div class="dl" style="left:19px;top:37px;">数字</div>
<div class="abs" style="left:56px;top:34px;width:48px;height:22px;background:#f3f3f3;border:1px solid #d6d6d6;border-bottom:none;border-left:none"></div>
<div class="dl" style="left:67px;top:38px;">对齐</div>
<div class="abs" style="left:104px;top:34px;width:48px;height:22px;background:#f3f3f3;border:1px solid #d6d6d6;border-bottom:none;border-left:none"></div>
<div class="dl" style="left:115px;top:38px;">字体</div>
<div class="abs" style="left:152px;top:34px;width:47px;height:22px;background:#f3f3f3;border:1px solid #d6d6d6;border-bottom:none;border-left:none"></div>
<div class="dl" style="left:163px;top:38px;">边框</div>
<div class="abs" style="left:199px;top:34px;width:48px;height:22px;background:#f3f3f3;border:1px solid #d6d6d6;border-bottom:none;border-left:none"></div>
<div class="dl" style="left:210px;top:38px;">图案</div>
<div class="abs" style="left:247px;top:34px;width:48px;height:22px;background:#f3f3f3;border:1px solid #d6d6d6;border-bottom:none;border-left:none"></div>
<div class="dl" style="left:258px;top:38px;">保护</div>
<div class="dl" style="left:15px;top:65px;">分类(<u>C</u>):</div>
<div class="abs" style="left:15px;top:87px;width:110px;height:283px;background:#fff;border:1px solid #828790"></div>
<div class="dl" style="left:20px;top:93px;">常规</div>
<div class="dl" style="left:20px;top:116px;">数值</div>
<div class="dl" style="left:20px;top:139px;">货币</div>
<div class="dl" style="left:20px;top:162px;">会计专用</div>
<div class="dl" style="left:20px;top:185px;">日期</div>
<div class="dl" style="left:20px;top:208px;">时间</div>
<div class="dl" style="left:20px;top:231px;">百分比</div>
<div class="dl" style="left:20px;top:254px;">分数</div>
<div class="dl" style="left:20px;top:277px;">科学记数</div>
<div class="dl" style="left:20px;top:300px;">文本</div>
<div class="abs" style="left:17px;top:319px;width:106px;height:22px;background:#e6e8ec"></div>
<div class="dl" style="left:20px;top:323px;">特殊</div>
<div class="dl" style="left:20px;top:346px;">自定义</div>
<div class="abs" style="left:131px;top:95px;width:304px;height:41px;border:1px solid #dcdcdc"></div>
<div class="abs" style="left:137px;top:89px;width:31px;height:12px;background:#fff"></div>
<div class="dl" style="left:140px;top:89px;">示例</div>
<div class="dl" style="left:139px;top:113px;">壹拾柒万捌仟玖佰肆拾伍元壹角陆分</div>
<div class="dl" style="left:139px;top:144px;">类型(<u>T</u>):</div>
<div class="abs" style="left:139px;top:162px;width:283px;height:165px;background:#fff;border:1px solid #828790"></div>
<div class="dl" style="left:144px;top:168px;">邮政编码</div>
<div class="dl" style="left:144px;top:191px;">中文小写数字</div>
<div class="dl" style="left:144px;top:214px;">中文大写数字</div>
<div class="dl" style="left:144px;top:237px;">中文大写数字2</div>
<div class="abs" style="left:141px;top:256px;width:279px;height:23px;background:#e6e8ec;border:1px dotted #333"></div>
<div class="dl" style="left:144px;top:260px;">人民币大写</div>
<div class="dl" style="left:144px;top:283px;">单位：万元</div>
<div class="dl" style="left:144px;top:306px;">正负号</div>
<div class="dl" style="left:15px;top:390px;">特殊格式可用于跟踪数据列表及数据库的值。</div>
<svg style="left:11px;top:495px" width="14" height="14" viewBox="0 0 14 14"><circle cx="7" cy="7" r="6.300" fill="none" stroke="#5aa08a" stroke-width="1"/><path d="M5.500 4L9.500 7L5.500 10Z" fill="none" stroke="#5aa08a" stroke-width="1"/></svg>
<div class="dl" style="left:31px;top:494px;color:#4a8ad4">操作技巧</div>
<div class="abs" style="left:282px;top:487px;width:77px;height:30px;background:#e1e1e1;border:2px solid #0078d7"></div>
<div class="dl" style="left:320px;top:495px;transform:translateX(-50%)">确定</div>
<div class="abs" style="left:367px;top:487px;width:77px;height:30px;background:#e1e1e1;border:1px solid #adadad"></div>
<div class="dl" style="left:405px;top:495px;transform:translateX(-50%)">取消</div>
<svg style="left:51px;top:274px" width="90" height="60" viewBox="770 525 90 60"><path d="M773.500 581L837 543.300" stroke="#f01416" stroke-width="1.700" fill="none"/><path d="M856 530L827.500 541.300L836.800 543.500L833 549.800Z" fill="#f01416"/></svg>
</div>
<!-- ============ WATERMARK ============ -->
<div class="abs" style="left:0;top:992px;width:1920px;height:64px;font-family:'Liberation Sans','Noto Sans CJK SC',sans-serif;font-size:47px;line-height:64px;font-weight:500;color:#fff;text-shadow:4px 3px 0 #000,3px 2px 0 #000,2px 2px 0 #000,1px 1px 0 #000"><span style="position:absolute;top:0;white-space:nowrap;left:1497.5px;letter-spacing:-.5px">头条</span><span style="position:absolute;top:0;white-space:nowrap;left:1604px;font-weight:700">@</span><span style="position:absolute;top:0;white-space:nowrap;left:1657px">小</span><span style="position:absolute;top:0;white-space:nowrap;left:1703px;font-weight:700;transform:scaleX(1.1);transform-origin:0 0">K</span><span style="position:absolute;top:0;white-space:nowrap;left:1746.3px;letter-spacing:-.5px">说办公</span></div>
</body>
</html>
